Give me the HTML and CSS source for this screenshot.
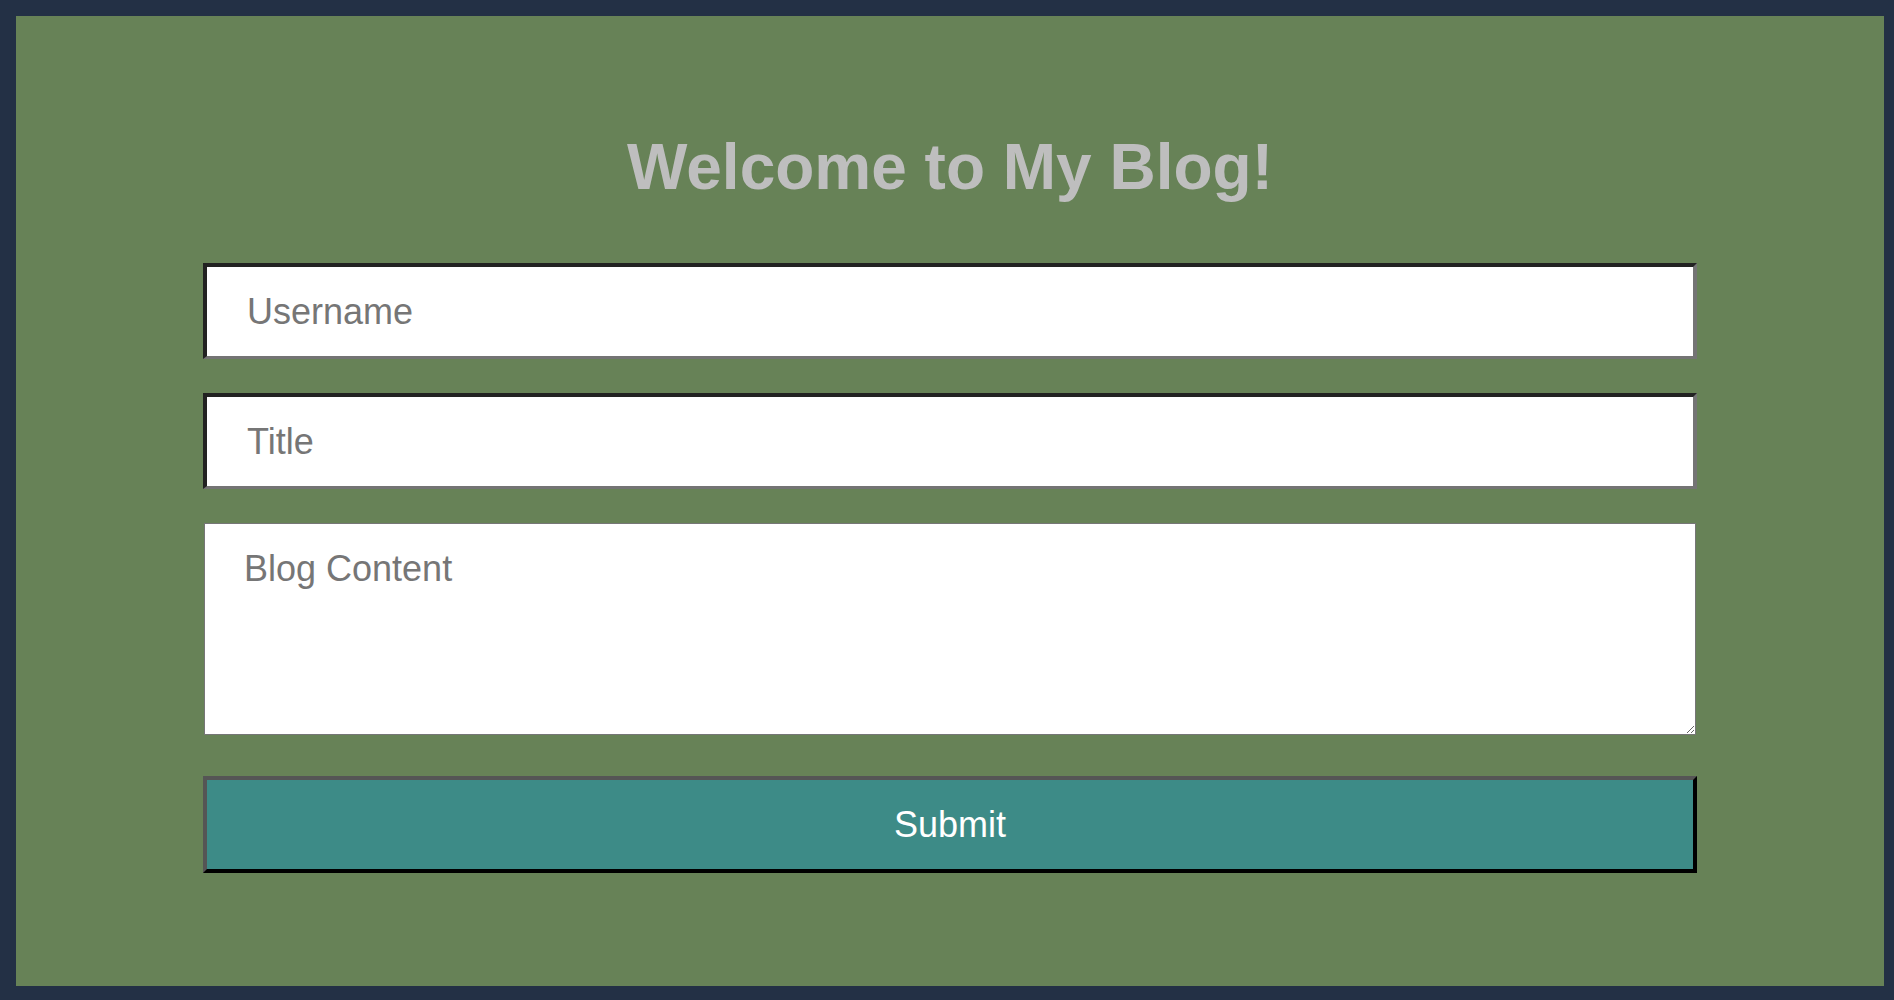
FILE: index.html
```html
<!DOCTYPE html>
<html lang="en">
<head>
<meta charset="utf-8">
<title>My Blog</title>
<link rel="stylesheet" href="styles.css">
</head>
<body>
  <main class="page">
    <h1 class="title">Welcome to My Blog!</h1>
    <form class="blog-form">
      <input class="field" type="text" placeholder="Username">
      <input class="field" type="text" placeholder="Title">
      <textarea class="content" placeholder="Blog Content"></textarea>
      <button class="submit" type="button">Submit</button>
    </form>
  </main>
</body>
</html>
```

FILE: styles.css
```css
html, body {
  margin: 0;
  height: 100%;
}

body {
  background: #233045;
  padding: 16px 10px 14px 16px;
  box-sizing: border-box;
  font-family: "Liberation Sans", Arial, Helvetica, sans-serif;
}

.page {
  background: #678257;
  height: 100%;
  box-sizing: border-box;
  padding-top: 114px;
  display: flex;
  flex-direction: column;
  align-items: center;
}

.title {
  margin: 0;
  font-size: 64px;
  line-height: 75px;
  font-weight: bold;
  color: #bebebe;
  text-align: center;
}

.blog-form {
  margin-top: 58px;
  width: 1494px;
  display: flex;
  flex-direction: column;
  gap: 34px;
}

.field {
  box-sizing: border-box;
  width: 100%;
  height: 96px;
  margin: 0;
  padding: 0 40px;
  border-style: solid;
  border-width: 4px 4px 3px 4px;
  border-color: #222222 #747474 #747474 #222222;
  background: #ffffff;
  font-family: "Liberation Sans", Arial, Helvetica, sans-serif;
  font-size: 36px;
  color: #333333;
  outline: none;
}

.content {
  box-sizing: border-box;
  width: 1492px;
  height: 212px;
  margin: 0 1px;
  padding: 24px 39px;
  border: 1px solid #767676;
  background: #ffffff;
  font-family: "Liberation Sans", Arial, Helvetica, sans-serif;
  font-size: 36px;
  line-height: 41px;
  color: #333333;
  outline: none;
}

.field::placeholder,
.content::placeholder {
  color: #767676;
  opacity: 1;
}

.submit {
  box-sizing: border-box;
  width: 100%;
  height: 97px;
  margin: 7px 0 0;
  border-style: solid;
  border-width: 4px;
  border-color: #555555 #000000 #000000 #555555;
  background: #3d8b87;
  color: #ffffff;
  font-family: "Liberation Sans", Arial, Helvetica, sans-serif;
  font-size: 36px;
  cursor: pointer;
}
```
